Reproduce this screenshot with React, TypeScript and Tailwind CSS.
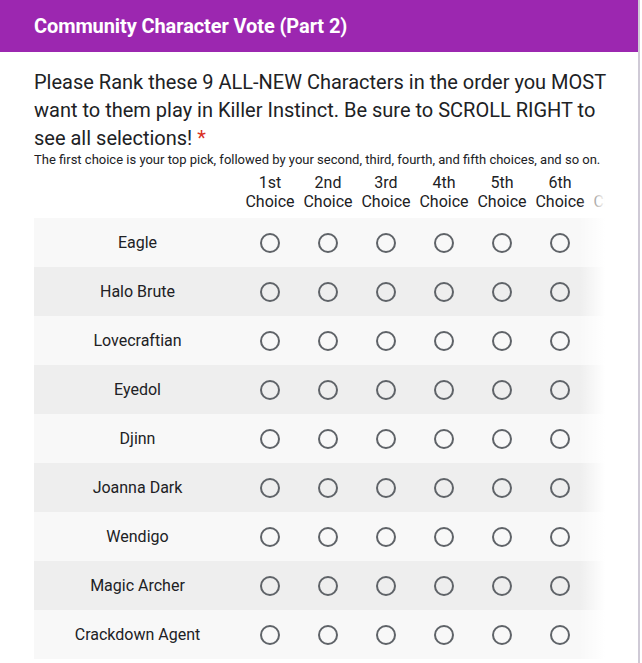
import React from 'react';

const characters = [
    'Eagle',
    'Halo Brute',
    'Lovecraftian',
    'Eyedol',
    'Djinn',
    'Joanna Dark',
    'Wendigo',
    'Magic Archer',
    'Crackdown Agent',
];

const choices = ['1st', '2nd', '3rd', '4th', '5th', '6th', '7th', '8th', '9th'];

function Radio() {
    return <div className="w-5 h-5 rounded-full border-2 border-[#5f6368] bg-transparent" />;
}

export default function App() {
    return (
        <div
            className="w-[642px] h-[663px] overflow-hidden bg-white"
            style={{ fontFamily: 'Roboto, "Liberation Sans", sans-serif' }}
        >
            <div className="w-[640px] h-full border-r-2 border-[#cfcad6]">
                <header className="h-[52px] bg-[#9c27b0] flex items-center pl-[34px]">
                    <h1 className="text-white text-[20px] font-bold tracking-[-0.1px]">
                        Community Character Vote (Part 2)
                    </h1>
                </header>

                <div className="pl-[34px] pt-[16px]">
                    <p className="text-[20px] leading-[28px] text-[#202124] w-[576px]">
                        Please Rank these 9 ALL-NEW Characters in the order you MOST want to them play in
                        Killer Instinct. Be sure to SCROLL RIGHT to see all selections!{' '}
                        <span className="text-[#d93025]">*</span>
                    </p>
                    <p className="text-[13px] leading-[16px] text-[#202124]">
                        The first choice is your top pick, followed by your second, third, fourth, and fifth
                        choices, and so on.
                    </p>

                    <div className="relative w-[571px] overflow-hidden mt-[5px]">
                        <div className="w-max">
                            <div className="flex h-[45px] items-start">
                                <div className="w-[207px] shrink-0" />
                                {choices.map((c) => (
                                    <div
                                        key={c}
                                        className="w-[58px] shrink-0 text-center text-[16px] leading-[19px] text-[#202124]"
                                    >
                                        <div>{c}</div>
                                        <div>Choice</div>
                                    </div>
                                ))}
                            </div>
                            {characters.map((name, i) => (
                                <div
                                    key={name}
                                    className={`flex h-[49px] items-center ${i % 2 === 0 ? 'bg-[#f8f8f8]' : 'bg-[#eeeeee]'}`}
                                >
                                    <div className="w-[207px] shrink-0 text-center text-[16px] text-[#202124]">
                                        {name}
                                    </div>
                                    {choices.map((c) => (
                                        <div key={c} className="w-[58px] shrink-0 flex justify-center">
                                            <Radio />
                                        </div>
                                    ))}
                                </div>
                            ))}
                        </div>
                        <div className="absolute top-0 right-0 h-full w-[26px] bg-gradient-to-r from-transparent to-white" />
                    </div>
                </div>
            </div>
        </div>
    );
}
